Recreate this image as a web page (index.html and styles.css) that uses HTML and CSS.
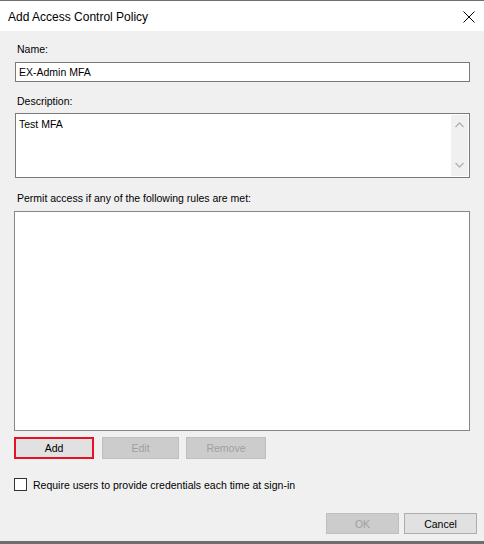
FILE: index.html
```html
<!DOCTYPE html>
<html lang="en">
<head>
    <meta charset="UTF-8">
    <meta name="viewport" content="width=device-width, initial-scale=1.0">
    <title>Add Access Control Policy</title>
    <link rel="stylesheet" href="styles.css">
</head>
<body>
    <div class="dialog">
        <!-- Title bar -->
        <div class="title-bar">
            <span class="title">Add Access Control Policy</span>
            <svg class="close" width="12" height="12" viewBox="0 0 12 12">
                <path d="M0.5 0.5 L11.5 11.5 M11.5 0.5 L0.5 11.5" stroke="#000" stroke-width="1" fill="none"/>
            </svg>
        </div>

        <!-- Form -->
        <div class="content">
            <div class="label label-name">Name:</div>
            <div class="textbox">EX-Admin MFA</div>

            <div class="label label-desc">Description:</div>
            <div class="textarea">
                <div class="textarea-text">Test MFA</div>
                <div class="scrollbar">
                    <svg width="9" height="6" viewBox="0 0 9 6">
                        <path d="M0.5 5 L4.5 1 L8.5 5" stroke="#b4b4b4" stroke-width="1.5" fill="none"/>
                    </svg>
                    <svg width="9" height="6" viewBox="0 0 9 6">
                        <path d="M0.5 1 L4.5 5 L8.5 1" stroke="#b4b4b4" stroke-width="1.5" fill="none"/>
                    </svg>
                </div>
            </div>

            <div class="label label-rules">Permit access if any of the following rules are met:</div>
            <div class="listbox"></div>

            <div class="rule-buttons">
                <button class="btn btn-add">Add</button>
                <button class="btn btn-edit" disabled>Edit</button>
                <button class="btn btn-remove" disabled>Remove</button>
            </div>

            <label class="check-row">
                <span class="checkbox"></span>
                <span>Require users to provide credentials each time at sign-in</span>
            </label>

            <div class="footer">
                <button class="btn btn-ok" disabled>OK</button>
                <button class="btn btn-cancel">Cancel</button>
            </div>
        </div>
    </div>
</body>
</html>
```

FILE: styles.css
```css
body {
    margin: 0;
    padding: 0;
    background-color: #f0f0f0;
    font-family: "Liberation Sans", Arial, sans-serif;
    font-size: 10.5px;
    color: #000000;
}
.dialog {
    height: 540px;
    border-top: 1px solid #707070;
    border-bottom: 3px solid #6e6e6e;
    background-color: #f0f0f0;
}
.title-bar {
    height: 30px;
    background-color: #ffffff;
    display: flex;
    align-items: center;
    justify-content: space-between;
    padding: 0 9px 0 8px;
}
.title {
    font-size: 12px;
    padding-top: 1px;
}
.close {
    margin-top: 1px;
}
.content {
    padding: 0 14px 0 14px;
    display: flex;
    flex-direction: column;
}
.label {
    line-height: 13px;
    padding-left: 3px;
}
.label-name {
    margin-top: 12px;
    margin-bottom: 6px;
}
.label-desc {
    margin-top: 13px;
    margin-bottom: 5px;
}
.label-rules {
    margin-top: 14px;
    margin-bottom: 6px;
}
.textbox {
    margin-left: 1px;
    height: 14px;
    line-height: 14px;
    padding: 2px 3px;
    border: 1px solid #7a7a7a;
    background-color: #ffffff;
}
.textarea {
    margin-left: 1px;
    height: 63px;
    border: 1px solid #7a7a7a;
    background-color: #ffffff;
    display: flex;
    justify-content: space-between;
}
.textarea-text {
    padding: 3px 3px;
    line-height: 14px;
}
.scrollbar {
    width: 17px;
    margin: 1px 1px 1px 0;
    background-color: #f0f0f0;
    display: flex;
    flex-direction: column;
    align-items: center;
    justify-content: space-between;
    padding: 7px 0 8px 0;
}
.listbox {
    height: 218px;
    border: 1px solid #828790;
    background-color: #ffffff;
}
.rule-buttons {
    margin-top: 6px;
    display: flex;
}
.btn {
    height: 22px;
    font-family: "Liberation Sans", Arial, sans-serif;
    font-size: 10.5px;
    background-color: #e1e1e1;
    border: 1px solid #adadad;
    color: #000000;
    padding: 0;
}
.btn:disabled {
    background-color: #cccccc;
    border-color: #bfbfbf;
    color: #a0a0a0;
}
.btn-add {
    width: 80px;
    border: 2px solid #e81123;
}
.btn-edit {
    width: 77px;
    margin-left: 8px;
}
.btn-remove {
    width: 80px;
    margin-left: 7px;
}
.check-row {
    margin-top: 19px;
    display: flex;
    align-items: center;
    gap: 6px;
}
.checkbox {
    width: 11px;
    height: 11px;
    border: 1px solid #333333;
    background-color: #ffffff;
}
.footer {
    margin-top: 22px;
    margin-right: -7px;
    display: flex;
    justify-content: flex-end;
    gap: 5px;
}
.btn-ok,
.btn-cancel {
    width: 73px;
    height: 21px;
}
```
